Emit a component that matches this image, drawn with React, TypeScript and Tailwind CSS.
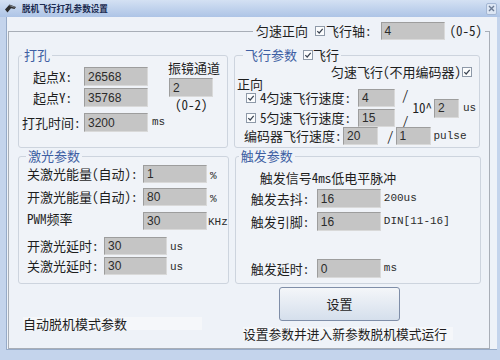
import * as React from "react";

const Check = ({ className = "" }: { className?: string }) => (
  <svg width="10" height="10" viewBox="0 0 10 10" className={"shrink-0 " + className}>
    <rect x="0.5" y="0.5" width="9" height="9" fill="#fbfcfd" stroke="#8e99a8" />
    <path d="M2.3 5.1 4.2 7 7.7 2.9" fill="none" stroke="#3a4352" strokeWidth="1.2" />
  </svg>
);

const Box = ({ v, className }: { v: string; className: string }) => (
  <div
    className={
      "flex shrink-0 items-center border border-t-[#9d9d9d] border-l-[#9d9d9d] border-r-[#d9d9d9] border-b-[#d9d9d9] bg-[#c5c5c5] pl-[3px] font-['Liberation_Sans',sans-serif] text-[12px] leading-none text-[#2b2b2b] " +
      className
    }
  >
    {v}
  </div>
);

const Unit = ({ children, className = "" }: { children: React.ReactNode; className?: string }) => (
  <span className={"font-['Liberation_Mono',monospace] text-[11px] leading-none text-[#2b2b2b] " + className}>
    {children}
  </span>
);

function Group({
  legend,
  legendClass,
  className,
  children,
}: {
  legend: React.ReactNode;
  legendClass: string;
  className: string;
  children: React.ReactNode;
}) {
  return (
    <fieldset className={"shrink-0 rounded-[3px] border border-[#cdd4de] bg-[#f0f3f8] " + className}>
      <legend className={"px-[2px] py-[1px] leading-[14px] " + legendClass}>{legend}</legend>
      {children}
    </fieldset>
  );
}

const TitleIcon = () => (
  <svg width="13" height="11" viewBox="0 0 13 11" className="ml-[4px] shrink-0">
    <path d="M1 6.5 5.5 1.5 12 4 10.5 6 7 5.2 3.5 9.5Z" fill="#2d2d2d" />
    <path d="M5.6 2.6 10.6 4.3" stroke="#9aa3ad" strokeWidth="0.8" />
  </svg>
);

export default function App() {
  return (
    <div className="flex h-[360px] w-[500px] flex-col overflow-hidden bg-[#c4d4ec] font-['Noto_Sans_Mono_CJK_SC','Noto_Sans_CJK_SC',sans-serif] text-[13px] text-[#1e1e1e]">
      {/* title bar */}
      <div className="flex h-[17px] shrink-0 items-center bg-linear-to-b from-[#d4e1f3] to-[#adc4e6]">
        <TitleIcon />
        <span className="ml-[5px] text-[8.6px] font-bold leading-none text-[#1b2b50]">脱机飞行打孔参数设置</span>
        <div className="ml-auto mr-[3px] flex h-[12px] w-[11px] items-center justify-center rounded-[2px] border border-[#a4b7d4] bg-[#dce6f4]">
          <svg width="7" height="7" viewBox="0 0 7 7">
            <path d="M1 1 6 6M6 1 1 6" stroke="#6d7c95" strokeWidth="1.4" />
          </svg>
        </div>
      </div>

      <div className="flex min-h-0 flex-1 pb-[10px] pl-[6px] pr-[3px]">
        <div className="flex-1 border-b border-l border-[#97abc8] bg-[#eef2f8] pl-[1px] pt-[5px]">
          <fieldset className="h-[327px] w-[482px] border border-[#a8aeb7]">
            <legend className="ml-auto mr-[4px] px-[3px]">
              <div className="flex h-[18px] items-center">
                <span className="leading-[14px]">匀速正向</span>
                <Check className="ml-[7px]" />
                <span className="ml-[1px] leading-[14px]">飞行轴:</span>
                <Box v="4" className="ml-[9px] h-[18px] w-[64px]" />
                <span className="ml-[5px] leading-[14px]">(0-5)</span>
              </div>
            </legend>

            {/* first row of groups */}
            <div className="mt-[7px] flex gap-[6px] pl-[9px]">
              <Group className="h-[101px] w-[210px]" legendClass="ml-[3px] text-[#3e5fa3]" legend="打孔">
                <div className="flex pt-[4px]">
                  <div className="flex w-[146px] shrink-0 flex-col">
                    <div className="flex h-[19px] items-center">
                      <span className="w-[65px] shrink-0 pl-[14px] leading-[14px]">起点X:</span>
                      <Box v="26568" className="h-[19px] w-[64px]" />
                    </div>
                    <div className="mt-[2px] flex h-[19px] items-center">
                      <span className="w-[65px] shrink-0 pl-[14px] leading-[14px]">起点Y:</span>
                      <Box v="35768" className="h-[19px] w-[64px]" />
                    </div>
                    <div className="mt-[6px] flex h-[19px] items-center">
                      <span className="w-[65px] shrink-0 pl-[3px] leading-[14px]">打孔时间:</span>
                      <Box v="3200" className="h-[19px] w-[64px]" />
                      <Unit className="ml-[4px]">ms</Unit>
                    </div>
                  </div>
                  <div className="-mt-[6px] ml-[3px] flex flex-col">
                    <span className="leading-[14px]">振镜通道</span>
                    <Box v="2" className="ml-[1px] mt-[3px] h-[19px] w-[44px]" />
                    <span className="ml-[7px] mt-[1px] leading-[14px]">(0-2)</span>
                  </div>
                </div>
              </Group>

              <Group
                className="h-[101px] w-[246px]"
                legendClass="ml-[8px]"
                legend={
                  <span className="flex items-center">
                    <span className="text-[#3e5fa3]">飞行参数</span>
                    <Check className="ml-[6px]" />
                    <span>飞行</span>
                  </span>
                }
              >
                <div className="flex flex-col pt-[2px]">
                  <div className="flex h-[13px] items-center justify-end pr-[7px]">
                    <span className="leading-[13px]">匀速飞行(不用编码器)</span>
                    <Check className="ml-[1px]" />
                  </div>
                  <div className="h-[11px] pl-[2px] leading-[11px]">正向</div>
                  <div className="flex items-center">
                    <div className="flex flex-col">
                      <div className="flex h-[18px] items-center">
                        <Check className="ml-[11px]" />
                        <span className="ml-[4px] w-[95px] shrink-0 leading-[14px]">4匀速飞行速度:</span>
                        <Box v="4" className="ml-[3px] h-[18px] w-[37px]" />
                        <span className="ml-[7px] self-start leading-[12px]">/</span>
                      </div>
                      <div className="mt-[2px] flex h-[18px] items-center">
                        <Check className="ml-[11px]" />
                        <span className="ml-[4px] w-[95px] shrink-0 leading-[14px]">5匀速飞行速度:</span>
                        <Box v="15" className="ml-[3px] h-[18px] w-[37px]" />
                        <span className="ml-[7px] self-end leading-[12px]">/</span>
                      </div>
                    </div>
                    <span className="ml-[4px] leading-[14px]">10^</span>
                    <Box v="2" className="ml-[2px] h-[19px] w-[25px]" />
                    <Unit className="ml-[4px]">us</Unit>
                  </div>
                  <div className="flex h-[18px] items-center">
                    <span className="ml-[9px] w-[99px] shrink-0 leading-[14px]">编码器飞行速度:</span>
                    <Box v="20" className="h-[18px] w-[35px]" />
                    <span className="ml-[9px] leading-[14px]">/</span>
                    <Box v="1" className="ml-[2px] h-[18px] w-[35px]" />
                    <Unit className="ml-[3px]">pulse</Unit>
                  </div>
                </div>
              </Group>
            </div>

            {/* second row of groups */}
            <div className="flex gap-[6px] pl-[9px]">
              <Group className="h-[136px] w-[210px]" legendClass="ml-[7px] text-[#3e5fa3]" legend="激光参数">
                <div className="flex flex-col">
                  <div className="mt-[1px] flex h-[18px] items-center">
                    <span className="w-[124px] shrink-0 pl-[8px] leading-[14px]">关激光能量(自动):</span>
                    <Box v="1" className="h-[18px] w-[64px]" />
                    <Unit className="ml-[3px] mt-[4px]">%</Unit>
                  </div>
                  <div className="mt-[5px] flex h-[18px] items-center">
                    <span className="w-[124px] shrink-0 pl-[8px] leading-[14px]">开激光能量(自动):</span>
                    <Box v="80" className="h-[18px] w-[64px]" />
                    <Unit className="ml-[3px] mt-[4px]">%</Unit>
                  </div>
                  <div className="mt-[6px] flex h-[18px] items-center">
                    <span className="w-[124px] shrink-0 self-start pl-[8px] leading-[13px]">PWM频率</span>
                    <Box v="30" className="h-[18px] w-[64px]" />
                    <Unit className="ml-[1px] mt-[3px]">KHz</Unit>
                  </div>
                  <div className="mt-[7px] flex h-[18px] items-center">
                    <span className="w-[85px] shrink-0 pl-[8px] leading-[14px]">开激光延时:</span>
                    <Box v="30" className="h-[18px] w-[63px]" />
                    <Unit className="ml-[3px] mt-[3px]">us</Unit>
                  </div>
                  <div className="mt-[2px] flex h-[18px] items-center">
                    <span className="w-[85px] shrink-0 pl-[8px] leading-[14px]">关激光延时:</span>
                    <Box v="30" className="h-[18px] w-[63px]" />
                    <Unit className="ml-[3px] mt-[3px]">us</Unit>
                  </div>
                </div>
              </Group>

              <Group className="h-[136px] w-[246px]" legendClass="ml-[3px] text-[#3e5fa3]" legend="触发参数">
                <div className="flex flex-col">
                  <div className="mt-[7px] pl-[24px] leading-[14px]">触发信号4ms低电平脉冲</div>
                  <div className="mt-[4px] flex h-[19px] items-center">
                    <span className="w-[81px] shrink-0 pl-[15px] leading-[14px]">触发去抖:</span>
                    <Box v="16" className="h-[19px] w-[64px]" />
                    <Unit className="ml-[3px]">200us</Unit>
                  </div>
                  <div className="mt-[4px] flex h-[19px] items-center">
                    <span className="w-[81px] shrink-0 pl-[15px] leading-[14px]">触发引脚:</span>
                    <Box v="16" className="h-[19px] w-[64px]" />
                    <Unit className="ml-[3px]">DIN[11-16]</Unit>
                  </div>
                  <div className="mt-[28px] flex h-[19px] items-center">
                    <span className="w-[81px] shrink-0 pl-[15px] leading-[14px]">触发延时:</span>
                    <Box v="0" className="h-[19px] w-[64px]" />
                    <Unit className="ml-[3px]">ms</Unit>
                  </div>
                </div>
              </Group>
            </div>

            {/* bottom area */}
            <div className="flex gap-[6px] pl-[9px]">
              <div className="w-[210px] shrink-0">
                <div className="ml-[5px] mt-[33px] h-[13px] w-[179px] whitespace-nowrap bg-[#f5f7fa] leading-[13px]">
                  自动脱机模式参数
                </div>
              </div>
              <div className="flex w-[246px] shrink-0 flex-col">
                <button
                  type="button"
                  className="ml-[45px] mt-[3px] flex h-[34px] w-[121px] items-center justify-center rounded-[3px] border border-[#7f8ea8] bg-linear-to-b from-[#f4f6f9] to-[#d5dfec] leading-[14px] text-[#1e1e1e]"
                >
                  设置
                </button>
                <div className="ml-[9px] mt-[6px] h-[13px] w-[210px] whitespace-nowrap bg-[#f5f7fa] text-[12.75px] leading-[13px]">
                  设置参数并进入新参数脱机模式运行
                </div>
              </div>
            </div>
          </fieldset>
        </div>
      </div>
    </div>
  );
}
